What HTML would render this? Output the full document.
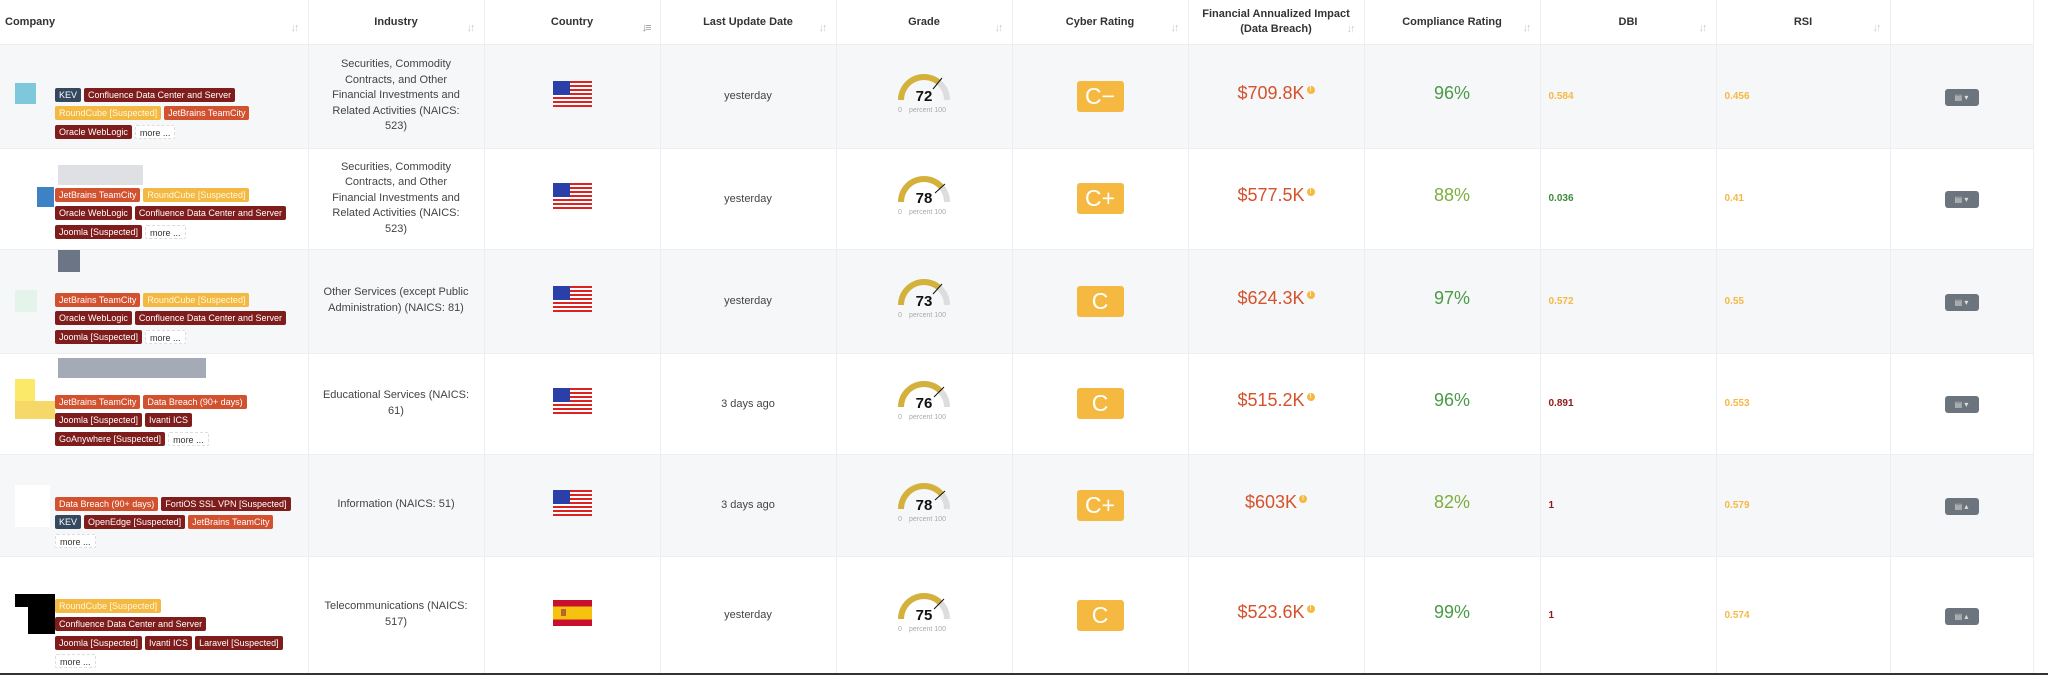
<!DOCTYPE html>
<html><head><meta charset="utf-8"><style>
*{margin:0;padding:0;box-sizing:border-box}
body{width:2048px;height:675px;overflow:hidden;background:#fff;font-family:"Liberation Sans",sans-serif;color:#333;position:relative}
table{border-collapse:collapse;table-layout:fixed;width:2033px}
td,th{border-right:1px solid #eceef1;vertical-align:middle;text-align:center;position:relative}
th{height:44px;font-size:11px;font-weight:bold;color:#333;background:#fff;border-bottom:1px solid #eceef1}
th .s{position:absolute;right:10px;top:22px;color:#ccc;font-size:11px;font-weight:normal;letter-spacing:-2px}
tr.g td{background:#f6f7f9}
td{border-bottom:1px solid #eceef1}
.ind{font-size:11px;line-height:15.6px;color:#444;padding:0 16px}
.ind.w{padding:0 4px}
.dt{font-size:11px;color:#444}
.cy{display:inline-block;width:47px;height:31px;background:#f5b942;border-radius:3px;color:#fff;font-size:23px;line-height:31px}
.fin{font-size:18px;color:#d4522c;margin-top:-6px}
.fin i{display:inline-block;width:8px;height:8px;border-radius:50%;background:#f5b942;vertical-align:top;margin-top:3px;margin-left:2px;font-style:normal;font-size:6px;color:#fff;line-height:8px;font-weight:bold}
.cmp{font-size:18px;margin-top:-6px}
.num{text-align:left;padding-left:8px;font-size:10px;font-weight:bold}
.btn{display:inline-block;width:34px;height:17px;background:#6c757d;border-radius:3px;color:#ddd;font-size:8px;line-height:17px}
.co{text-align:left}
.tags{position:absolute;left:55px;width:252px;line-height:0}
.t{display:inline-block;height:14px;line-height:14px;font-size:9px;color:#fff;padding:0 4px;border-radius:2px;margin:0 3px 4.5px 0;white-space:nowrap;vertical-align:top}
.r{background:#7f1d1d}.o{background:#d2512f}.y{background:#f4b942;color:#fff8e0}.k{background:#34495e}
.m{background:#fff;color:#333;border:1px dashed #ddd;height:14px}
.blk{position:absolute}
</style></head><body>
<table>
<colgroup><col style="width:308px"><col style="width:176px"><col style="width:176px"><col style="width:176px"><col style="width:176px"><col style="width:176px"><col style="width:176px"><col style="width:176px"><col style="width:176px"><col style="width:174px"><col style="width:143px"></colgroup>
<tr><th style="text-align:left;padding-left:5px">Company<span class="s">↓↑</span></th><th>Industry<span class="s">↓↑</span></th><th>Country<span class="s" style="color:#999">↓≡</span></th><th>Last Update Date<span class="s">↓↑</span></th><th>Grade<span class="s">↓↑</span></th><th>Cyber Rating<span class="s">↓↑</span></th><th style="line-height:15px">Financial Annualized Impact<br>(Data Breach)<span class="s">↓↑</span></th><th>Compliance Rating<span class="s">↓↑</span></th><th>DBI<span class="s">↓↑</span></th><th>RSI<span class="s">↓↑</span></th><th></th></tr>

<tr class="g" style="height:104px"><td class="co"><div class="blk" style="left:15px;top:38px;width:21px;height:21px;background:#7ec8dc"></div><div class="tags" style="top:43px"><span class="t k">KEV</span><span class="t r">Confluence Data Center and Server</span><br><span class="t y">RoundCube [Suspected]</span><span class="t o">JetBrains TeamCity</span><br><span class="t r">Oracle WebLogic</span><span class="t m">more ...</span></div></td>
<td class="ind">Securities, Commodity Contracts, and Other Financial Investments and Related Activities (NAICS: 523)</td>
<td><svg width="39" height="26" viewBox="0 0 39 26"><rect width="39" height="26" fill="#fff"/><g fill="#d22"><rect y="0" width="39" height="2"/><rect y="4" width="39" height="2"/><rect y="8" width="39" height="2"/><rect y="12" width="39" height="2"/><rect y="16" width="39" height="2"/><rect y="20" width="39" height="2"/><rect y="24" width="39" height="2"/></g><rect width="17" height="14" fill="#2a3fa8"/></svg></td>
<td class="dt">yesterday</td>
<td><svg width="70" height="48" viewBox="0 0 70 48"><path d="M12 30A23 23 0 0 1 58 30" fill="none" stroke="#ddd" stroke-width="6"/><path d="M12 30A23 23 0 0 1 49.66 12.27" fill="none" stroke="#d4b13a" stroke-width="6"/><line x1="44" y1="19" x2="53" y2="8" stroke="#111" stroke-width="1"/><text x="35" y="31" text-anchor="middle" font-size="15" font-weight="bold" fill="#111" font-family="Liberation Sans">72</text><text x="9" y="42" font-size="7" fill="#aaa" font-family="Liberation Sans">0</text><text x="20" y="42" font-size="7" fill="#aaa" font-family="Liberation Sans">percent 100</text></svg></td>
<td><span class="cy">C−</span></td>
<td><div class="fin">$709.8K<i>!</i></div></td>
<td><div class="cmp" style="color:#4a9a46">96%</div></td>
<td class="num" style="color:#f5b942">0.584</td><td class="num" style="color:#f5b942">0.456</td>
<td><span class="btn">▤ ▾</span></td></tr>

<tr style="height:101px"><td class="co"><div class="blk" style="left:58px;top:16px;width:85px;height:20px;background:#c9ccd2;opacity:.6"></div><div class="blk" style="left:37px;top:38px;width:17px;height:20px;background:#3d82c4"></div><div class="tags" style="top:39px"><span class="t o">JetBrains TeamCity</span><span class="t y">RoundCube [Suspected]</span><br><span class="t r">Oracle WebLogic</span><span class="t r">Confluence Data Center and Server</span><br><span class="t r">Joomla [Suspected]</span><span class="t m">more ...</span></div></td>
<td class="ind">Securities, Commodity Contracts, and Other Financial Investments and Related Activities (NAICS: 523)</td>
<td><svg width="39" height="26" viewBox="0 0 39 26"><rect width="39" height="26" fill="#fff"/><g fill="#d22"><rect y="0" width="39" height="2"/><rect y="4" width="39" height="2"/><rect y="8" width="39" height="2"/><rect y="12" width="39" height="2"/><rect y="16" width="39" height="2"/><rect y="20" width="39" height="2"/><rect y="24" width="39" height="2"/></g><rect width="17" height="14" fill="#2a3fa8"/></svg></td>
<td class="dt">yesterday</td>
<td><svg width="70" height="48" viewBox="0 0 70 48"><path d="M12 30A23 23 0 0 1 58 30" fill="none" stroke="#ddd" stroke-width="6"/><path d="M12 30A23 23 0 0 1 52.73 15.35" fill="none" stroke="#d4b13a" stroke-width="6"/><line x1="46" y1="21" x2="56" y2="12" stroke="#111" stroke-width="1"/><text x="35" y="31" text-anchor="middle" font-size="15" font-weight="bold" fill="#111" font-family="Liberation Sans">78</text><text x="9" y="42" font-size="7" fill="#aaa" font-family="Liberation Sans">0</text><text x="20" y="42" font-size="7" fill="#aaa" font-family="Liberation Sans">percent 100</text></svg></td>
<td><span class="cy">C+</span></td>
<td><div class="fin">$577.5K<i>!</i></div></td>
<td><div class="cmp" style="color:#7cae3e">88%</div></td>
<td class="num" style="color:#3e8a3a">0.036</td><td class="num" style="color:#f5b942">0.41</td>
<td><span class="btn">▤ ▾</span></td></tr>

<tr class="g" style="height:104px"><td class="co"><div class="blk" style="left:58px;top:0px;width:22px;height:22px;background:#6b7585"></div><div class="blk" style="left:15px;top:40px;width:22px;height:22px;background:#e4f4ea"></div><div class="tags" style="top:43px"><span class="t o">JetBrains TeamCity</span><span class="t y">RoundCube [Suspected]</span><br><span class="t r">Oracle WebLogic</span><span class="t r">Confluence Data Center and Server</span><br><span class="t r">Joomla [Suspected]</span><span class="t m">more ...</span></div></td>
<td class="ind w">Other Services (except Public Administration) (NAICS: 81)</td>
<td><svg width="39" height="26" viewBox="0 0 39 26"><rect width="39" height="26" fill="#fff"/><g fill="#d22"><rect y="0" width="39" height="2"/><rect y="4" width="39" height="2"/><rect y="8" width="39" height="2"/><rect y="12" width="39" height="2"/><rect y="16" width="39" height="2"/><rect y="20" width="39" height="2"/><rect y="24" width="39" height="2"/></g><rect width="17" height="14" fill="#2a3fa8"/></svg></td>
<td class="dt">yesterday</td>
<td><svg width="70" height="48" viewBox="0 0 70 48"><path d="M12 30A23 23 0 0 1 58 30" fill="none" stroke="#ddd" stroke-width="6"/><path d="M12 30A23 23 0 0 1 50.2 12.75" fill="none" stroke="#d4b13a" stroke-width="6"/><line x1="44" y1="19" x2="53" y2="9" stroke="#111" stroke-width="1"/><text x="35" y="31" text-anchor="middle" font-size="15" font-weight="bold" fill="#111" font-family="Liberation Sans">73</text><text x="9" y="42" font-size="7" fill="#aaa" font-family="Liberation Sans">0</text><text x="20" y="42" font-size="7" fill="#aaa" font-family="Liberation Sans">percent 100</text></svg></td>
<td><span class="cy">C</span></td>
<td><div class="fin">$624.3K<i>!</i></div></td>
<td><div class="cmp" style="color:#4a9a46">97%</div></td>
<td class="num" style="color:#f5b942">0.572</td><td class="num" style="color:#f5b942">0.55</td>
<td><span class="btn">▤ ▾</span></td></tr>

<tr style="height:101px"><td class="co"><div class="blk" style="left:58px;top:4px;width:148px;height:20px;background:#7d8797;opacity:.7"></div><div class="blk" style="left:15px;top:25px;width:20px;height:22px;background:#fbe96a"></div><div class="blk" style="left:15px;top:47px;width:40px;height:18px;background:#f6d868"></div><div class="tags" style="top:41px"><span class="t o">JetBrains TeamCity</span><span class="t o">Data Breach (90+ days)</span><br><span class="t r">Joomla [Suspected]</span><span class="t r">Ivanti ICS</span><br><span class="t r">GoAnywhere [Suspected]</span><span class="t m">more ...</span></div></td>
<td class="ind" style="padding:0 10px">Educational Services (NAICS: 61)</td>
<td><svg width="39" height="26" viewBox="0 0 39 26"><rect width="39" height="26" fill="#fff"/><g fill="#d22"><rect y="0" width="39" height="2"/><rect y="4" width="39" height="2"/><rect y="8" width="39" height="2"/><rect y="12" width="39" height="2"/><rect y="16" width="39" height="2"/><rect y="20" width="39" height="2"/><rect y="24" width="39" height="2"/></g><rect width="17" height="14" fill="#2a3fa8"/></svg></td>
<td class="dt">3 days ago</td>
<td><svg width="70" height="48" viewBox="0 0 70 48"><path d="M12 30A23 23 0 0 1 58 30" fill="none" stroke="#ddd" stroke-width="6"/><path d="M12 30A23 23 0 0 1 51.77 14.25" fill="none" stroke="#d4b13a" stroke-width="6"/><line x1="45" y1="20" x2="55" y2="10" stroke="#111" stroke-width="1"/><text x="35" y="31" text-anchor="middle" font-size="15" font-weight="bold" fill="#111" font-family="Liberation Sans">76</text><text x="9" y="42" font-size="7" fill="#aaa" font-family="Liberation Sans">0</text><text x="20" y="42" font-size="7" fill="#aaa" font-family="Liberation Sans">percent 100</text></svg></td>
<td><span class="cy">C</span></td>
<td><div class="fin">$515.2K<i>!</i></div></td>
<td><div class="cmp" style="color:#4a9a46">96%</div></td>
<td class="num" style="color:#8b1a1a">0.891</td><td class="num" style="color:#f5b942">0.553</td>
<td><span class="btn">▤ ▾</span></td></tr>

<tr class="g" style="height:102px"><td class="co"><div class="blk" style="left:15px;top:30px;width:35px;height:42px;background:#fff"></div><div class="tags" style="top:42px"><span class="t o">Data Breach (90+ days)</span><span class="t r">FortiOS SSL VPN [Suspected]</span><br><span class="t k">KEV</span><span class="t r">OpenEdge [Suspected]</span><span class="t o">JetBrains TeamCity</span><br><span class="t m">more ...</span></div></td>
<td class="ind w">Information (NAICS: 51)</td>
<td><svg width="39" height="26" viewBox="0 0 39 26"><rect width="39" height="26" fill="#fff"/><g fill="#d22"><rect y="0" width="39" height="2"/><rect y="4" width="39" height="2"/><rect y="8" width="39" height="2"/><rect y="12" width="39" height="2"/><rect y="16" width="39" height="2"/><rect y="20" width="39" height="2"/><rect y="24" width="39" height="2"/></g><rect width="17" height="14" fill="#2a3fa8"/></svg></td>
<td class="dt">3 days ago</td>
<td><svg width="70" height="48" viewBox="0 0 70 48"><path d="M12 30A23 23 0 0 1 58 30" fill="none" stroke="#ddd" stroke-width="6"/><path d="M12 30A23 23 0 0 1 52.73 15.35" fill="none" stroke="#d4b13a" stroke-width="6"/><line x1="46" y1="21" x2="56" y2="12" stroke="#111" stroke-width="1"/><text x="35" y="31" text-anchor="middle" font-size="15" font-weight="bold" fill="#111" font-family="Liberation Sans">78</text><text x="9" y="42" font-size="7" fill="#aaa" font-family="Liberation Sans">0</text><text x="20" y="42" font-size="7" fill="#aaa" font-family="Liberation Sans">percent 100</text></svg></td>
<td><span class="cy">C+</span></td>
<td><div class="fin">$603K<i>!</i></div></td>
<td><div class="cmp" style="color:#7cae3e">82%</div></td>
<td class="num" style="color:#8b1a1a">1</td><td class="num" style="color:#f5b942">0.579</td>
<td><span class="btn">▤ ▴</span></td></tr>

<tr style="height:118px"><td class="co"><div class="blk" style="left:15px;top:37px;width:40px;height:40px;background:#000"></div><div class="blk" style="left:15px;top:50px;width:13px;height:30px;background:#fff"></div><div class="tags" style="top:42px"><span class="t y">RoundCube [Suspected]</span><br><span class="t r">Confluence Data Center and Server</span><br><span class="t r">Joomla [Suspected]</span><span class="t r">Ivanti ICS</span><span class="t r">Laravel [Suspected]</span><br><span class="t m">more ...</span></div></td>
<td class="ind w">Telecommunications (NAICS: 517)</td>
<td><svg width="39" height="26" viewBox="0 0 39 26"><rect width="39" height="26" fill="#c8102e"/><rect y="6.5" width="39" height="13" fill="#f7c20d"/><rect x="8" y="9" width="5" height="7" fill="#b5652d"/></svg></td>
<td class="dt">yesterday</td>
<td><svg width="70" height="48" viewBox="0 0 70 48"><path d="M12 30A23 23 0 0 1 58 30" fill="none" stroke="#ddd" stroke-width="6"/><path d="M12 30A23 23 0 0 1 51.26 13.74" fill="none" stroke="#d4b13a" stroke-width="6"/><line x1="45" y1="20" x2="55" y2="10" stroke="#111" stroke-width="1"/><text x="35" y="31" text-anchor="middle" font-size="15" font-weight="bold" fill="#111" font-family="Liberation Sans">75</text><text x="9" y="42" font-size="7" fill="#aaa" font-family="Liberation Sans">0</text><text x="20" y="42" font-size="7" fill="#aaa" font-family="Liberation Sans">percent 100</text></svg></td>
<td><span class="cy">C</span></td>
<td><div class="fin">$523.6K<i>!</i></div></td>
<td><div class="cmp" style="color:#4a9a46">99%</div></td>
<td class="num" style="color:#8b1a1a">1</td><td class="num" style="color:#f5b942">0.574</td>
<td><span class="btn">▤ ▴</span></td></tr>
</table>
<div style="position:absolute;left:0;top:673px;width:2048px;height:2px;background:#333"></div>
</body></html>
